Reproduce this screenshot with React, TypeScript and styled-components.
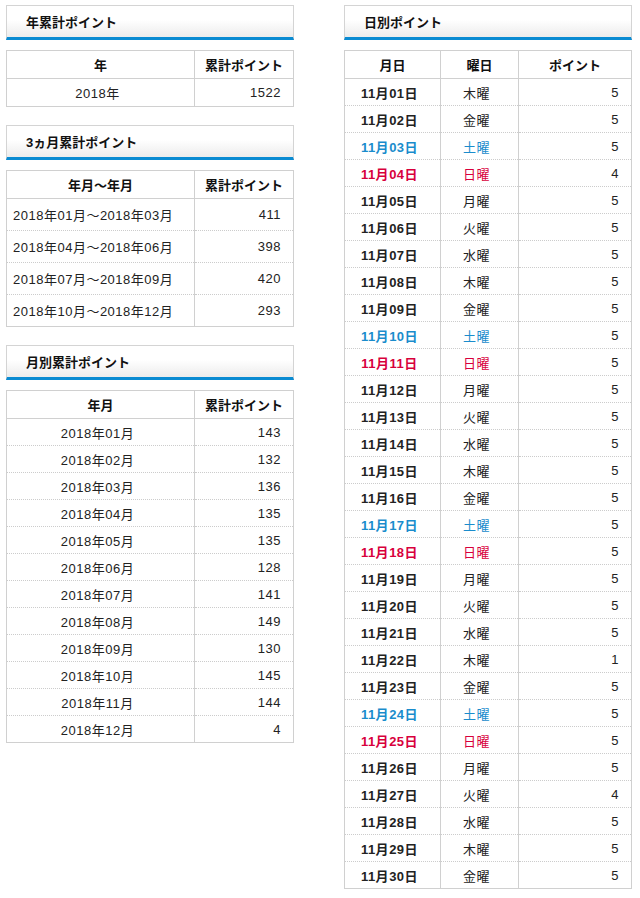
import React from 'react';
import styled, { createGlobalStyle } from 'styled-components';

const Global = createGlobalStyle`
  body {
    margin: 0;
    font-family: "Liberation Sans", "Noto Sans CJK JP", sans-serif;
    font-size: 13px;
    color: #222;
    background: #fff;
  }
`;

const Page = styled.div`
  display: grid;
  grid-template-columns: 288px 288px;
  column-gap: 50px;
  padding: 5px 0 0 6px;
`;

const Column = styled.div`
  display: flex;
  flex-direction: column;
`;

const Section = styled.section`
  margin-bottom: 18px;
`;

const Title = styled.h2`
  box-sizing: border-box;
  height: 35px;
  margin: 0 0 10px;
  padding: 0 0 0 19px;
  display: flex;
  align-items: center;
  font-size: 13px;
  font-weight: bold;
  color: #111;
  border: 1px solid #d4d4d4;
  border-bottom: 3px solid #0a8bd2;
  background: linear-gradient(#fff 45%, #ececec);
`;

const Table = styled.table`
  width: 100%;
  border-collapse: collapse;
  border: 1px solid #d0d0d0;
  table-layout: fixed;
`;

const Th = styled.th<{ $w?: number }>`
  height: 27px;
  font-weight: bold;
  color: #111;
  border: 1px solid #d0d0d0;
  text-align: center;
  padding: 0;
  ${(p) => (p.$w ? `width: ${p.$w}px;` : '')}
`;

const Td = styled.td<{ $h: number; $align?: string; $bold?: boolean; $tone?: string }>`
  height: ${(p) => p.$h - 1}px;
  padding: 0 12px 0 6px;
  border-left: 1px solid #d0d0d0;
  border-right: 1px solid #d0d0d0;
  border-bottom: 1px dotted #ccc;
  text-align: ${(p) => p.$align || 'right'};
  font-weight: ${(p) => (p.$bold ? 'bold' : 'normal')};
  color: ${(p) => (p.$tone === 'sat' ? '#1a8ccc' : p.$tone === 'sun' ? '#d8003c' : '#222')};
  letter-spacing: 0.5px;
`;

const quarters: [string, number][] = [
  ['2018年01月～2018年03月', 411],
  ['2018年04月～2018年06月', 398],
  ['2018年07月～2018年09月', 420],
  ['2018年10月～2018年12月', 293],
];

const months = [143, 132, 136, 135, 135, 128, 141, 149, 130, 145, 144, 4];

const week = ['木', '金', '土', '日', '月', '火', '水'];
const dayPoints: Record<number, number> = { 4: 4, 22: 1, 27: 4 };

const pad = (n: number) => String(n).padStart(2, '0');

export default function App() {
  return (
    <Page>
      <Global />
      <Column>
        <Section>
          <Title>年累計ポイント</Title>
          <Table>
            <thead>
              <tr>
                <Th>年</Th>
                <Th $w={98}>累計ポイント</Th>
              </tr>
            </thead>
            <tbody>
              <tr>
                <Td $h={28} $align="center">2018年</Td>
                <Td $h={28}>1522</Td>
              </tr>
            </tbody>
          </Table>
        </Section>
        <Section>
          <Title>3ヵ月累計ポイント</Title>
          <Table>
            <thead>
              <tr>
                <Th>年月～年月</Th>
                <Th $w={98}>累計ポイント</Th>
              </tr>
            </thead>
            <tbody>
              {quarters.map(([label, pts]) => (
                <tr key={label}>
                  <Td $h={32} $align="left">{label}</Td>
                  <Td $h={32}>{pts}</Td>
                </tr>
              ))}
            </tbody>
          </Table>
        </Section>
        <Section>
          <Title>月別累計ポイント</Title>
          <Table>
            <thead>
              <tr>
                <Th>年月</Th>
                <Th $w={98}>累計ポイント</Th>
              </tr>
            </thead>
            <tbody>
              {months.map((pts, i) => (
                <tr key={i}>
                  <Td $h={27} $align="center">2018年{pad(i + 1)}月</Td>
                  <Td $h={27}>{pts}</Td>
                </tr>
              ))}
            </tbody>
          </Table>
        </Section>
      </Column>
      <Column>
        <Section>
          <Title>日別ポイント</Title>
          <Table>
            <thead>
              <tr>
                <Th $w={95}>月日</Th>
                <Th $w={77}>曜日</Th>
                <Th>ポイント</Th>
              </tr>
            </thead>
            <tbody>
              {Array.from({ length: 30 }, (_, i) => {
                const d = i + 1;
                const w = week[i % 7];
                const tone = w === '土' ? 'sat' : w === '日' ? 'sun' : undefined;
                return (
                  <tr key={d}>
                    <Td $h={27} $align="center" $bold $tone={tone}>11月{pad(d)}日</Td>
                    <Td $h={27} $align="center" $tone={tone}>{w}曜</Td>
                    <Td $h={27}>{dayPoints[d] ?? 5}</Td>
                  </tr>
                );
              })}
            </tbody>
          </Table>
        </Section>
      </Column>
    </Page>
  );
}
